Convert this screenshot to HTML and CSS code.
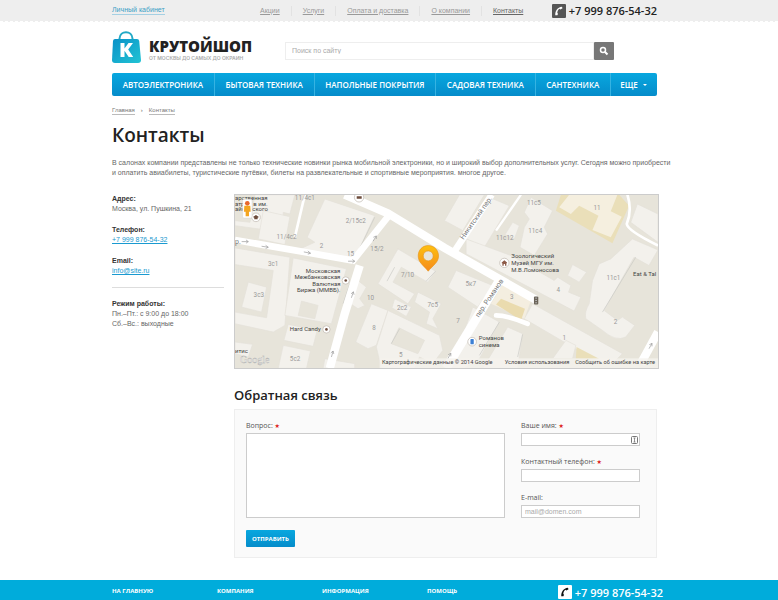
FILE: index.html
```html
<!DOCTYPE html>
<html lang="ru">
  <head>
    <meta charset="UTF-8" />
    <meta name="viewport" content="width=device-width, initial-scale=1.0" />
    <title>Контакты — Крутойшоп</title>
    <link rel="stylesheet" href="styles.css">
  </head>

  <body>
    <div class="topbar">
      <div class="container topbar-inner">
        <a href="#" class="cabinet">Личный кабинет</a>
        <nav class="top-menu">
          <a href="#">Акции</a>
          <a href="#">Услуги</a>
          <a href="#">Оплата и доставка</a>
          <a href="#">О компании</a>
          <a href="#" class="active">Контакты</a>
        </nav>
        <div class="phone">
          <svg class="phone-icon" viewBox="0 0 13 13">
            <rect width="13" height="13" rx="1" fill="#555" />
            <path d="M3 10.500 C3 6 5 3 9.200 2.500 L9.800 4 L7.800 5 L7 4.500 C5.600 5.500 5 6.800 4.900 8.400 L5.600 9 L5 10.500 Z" fill="#fff" />
          </svg>
          <span>+7 999 876-54-32</span>
        </div>
      </div>
    </div>

    <header class="container header">
      <a href="#" class="logo">
        <svg class="logo-icon" viewBox="0 0 29 32">
          <defs>
            <linearGradient id="bag" x1="0" y1="0" x2="1" y2="1">
              <stop offset="0" stop-color="#0991c8" />
              <stop offset="1" stop-color="#22c4d4" />
            </linearGradient>
          </defs>
          <path d="M7.5 9 V7.5 C8 -1 20 -1 20.5 7.5 V9" fill="none" stroke="#22a9c6" stroke-width="2" />
          <path d="M3 8 H25 Q27 8 27.2 10 L29 29 Q29 32 26 32 H3 Q0 32 0 29 L1 10 Q1.200 8 3 8 Z" fill="url(#bag)" />
          <path d="M8.500 12 H12.500 V17.500 L16.500 12 H21 L16.200 18.600 L21.200 26 H16.700 L12.500 19.800 V26 H8.500 Z" fill="#fff" />
        </svg>
        <span class="logo-text">
          <b>КРУТОЙШОП</b>
          <small>ОТ МОСКВЫ ДО САМЫХ ДО ОКРАИН</small>
        </span>
      </a>
      <form class="search">
        <input type="text" placeholder="Поиск по сайту" aria-label="Поиск по сайту" />
        <button type="button" aria-label="Найти">
          <svg viewBox="0 0 10 10">
            <circle cx="4" cy="4" r="2.500" fill="none" stroke="#fff" stroke-width="1.500" />
            <path d="M6 6 L8.500 8.500" stroke="#fff" stroke-width="2" />
          </svg>
        </button>
      </form>
    </header>

    <nav class="container main-menu">
      <a href="#">АВТОЭЛЕКТРОНИКА</a>
      <a href="#">БЫТОВАЯ ТЕХНИКА</a>
      <a href="#">НАПОЛЬНЫЕ ПОКРЫТИЯ</a>
      <a href="#">САДОВАЯ ТЕХНИКА</a>
      <a href="#">САНТЕХНИКА</a>
      <a href="#" class="more">ЕЩЕ
        <svg class="arrow" viewBox="0 0 6 4"><path d="M1 1 H5 L3 3 Z" fill="#fff" /></svg>
      </a>
    </nav>

    <main class="container">
      <div class="breadcrumbs">
        <a href="#">Главная</a>
        <span>›</span>
        <a href="#">Контакты</a>
      </div>
      <h1>Контакты</h1>
      <p class="intro">
        В салонах компании представлены не только технические новинки рынка мобильной электроники, но и широкий выбор дополнительных услуг. Сегодня можно приобрести<br />
        и оплатить авиабилеты, туристические путёвки, билеты на развлекательные и спортивные мероприятия. многое другое.
      </p>

      <div class="columns">
        <aside class="info">
          <p><b>Адрес:</b><br />Москва, ул. Пушкина, 21</p>
          <p><b>Телефон:</b><br /><a href="#">+7 999 876-54-32</a></p>
          <p><b>Email:</b><br /><a href="#">info@site.ru</a></p>
          <hr />
          <p><b>Режим работы:</b><br />Пн.–Пт.: с 9:00 до 18:00<br />Сб.–Вс.: выходные</p>
        </aside>

        <section class="content">
          <div class="map">
            <svg viewBox="15 12 1272 522" preserveAspectRatio="xMidYMid slice">
              <defs>
                <linearGradient id="pin" x1="0" y1="0" x2="0" y2="1">
                  <stop offset="0" stop-color="#fdc010" />
                  <stop offset="1" stop-color="#f58a1c" />
                </linearGradient>
              </defs>
              <rect x="15" y="12" width="1272" height="522" fill="#e7e4da" />

              <!-- buildings -->
              <g fill="#f3f1ec" stroke="#e4e1da" stroke-width="2">
                <path d="M75 12 H195 L180 70 L160 65 L160 125 L15 105 V90 L60 95 Z" />
                <path d="M100 60 L180 78 L165 162 L85 145 Z" />
                <path d="M285 25 L435 75 L375 205 L200 180 L255 155 L232 140 Z" />
                <path d="M15 172 L180 200 L165 405 L130 425 L15 400 V365 L110 382 L130 240 L15 222 Z" />
                <path d="M55 275 L110 290 L95 365 L35 350 Z" />
                <path d="M190 202 L350 235 L305 400 L165 375 Z" />
                <path d="M215 332 L265 345 L255 385 L205 375 Z" fill="#e7e4da" />
                <path d="M175 402 L262 420 L250 468 L162 450 Z" />
                <path d="M160 465 L242 482 L230 534 H145 Z" />
                <path d="M15 455 L68 462 L55 500 L15 490 Z" />
                <path d="M285 505 L375 520 V534 H280 Z" />
                <path d="M505 175 L618 242 L595 275 L515 230 L490 275 L555 310 L535 340 L445 280 Z" />
                <path d="M385 270 L410 290 L390 325 L405 345 L385 355 L355 335 Z" />
                <path d="M425 340 L475 360 L440 465 L415 475 L378 455 Z" />
                <path d="M475 360 L630 435 L640 480 L610 520 L570 500 L555 534 H455 L440 470 Z" />
                <path d="M508 412 L585 450 L565 490 L485 460 Z" fill="#e7e4da" />
                <path d="M495 325 L545 350 L530 378 L487 352 Z" />
                <path d="M565 305 L635 340 L610 385 L625 415 L590 400 L600 365 L555 335 Z" />
                <path d="M690 12 H765 L700 120 L645 90 Z" />
                <path d="M780 20 L840 45 L765 170 L710 145 Z" />
                <path d="M850 95 L870 105 L855 145 L827 132 Z" />
                <path d="M905 20 L970 60 L945 110 L955 130 L915 195 L872 170 L885 110 L900 85 L885 65 Z" />
                <path d="M710 145 L845 195 L975 270 L985 260 L1025 285 L1018 305 L1055 320 L1035 362 L710 190 Z" />
                <path d="M1030 222 L1072 245 L1050 275 L1015 255 Z" />
                <path d="M680 240 L790 285 L745 350 L655 290 Z" />
                <path d="M730 350 L810 395 L750 505 L705 534 H665 Z" />
                <path d="M835 410 L880 430 L865 534 H760 Z" />
                <path d="M910 340 L1180 490 L1150 520 L1090 505 L885 385 Z" />
                <path d="M1010 450 L1040 465 L1030 505 L970 505 Z" />
                <path d="M1210 145 L1287 178 L1260 225 L1215 200 L1125 360 L1165 390 L1180 380 L1217 405 L1190 440 Q1160 455 1120 420 L1070 385 Q1065 365 1080 340 L1090 270 L1110 220 L1145 205 Z" />
                <path d="M1225 40 L1287 70 V155 L1205 95 Z" />
              </g>
              <path d="M995 12 H1170 L1200 45 L1150 158 L980 60 Z" fill="#eadfb9" />
              <path d="M1020 12 H1165 L1145 62 L1178 78 L1145 140 L1090 118 L1108 75 L1050 45 L1025 70 L990 50 Z" fill="#f5efdf" />
              <path d="M820 280 L905 330 L885 385 L785 340 Z" fill="#f4eee0" />
              <path d="M815 325 L887 355 L875 390 L800 342 Z" fill="#eadbae" />
              <path d="M1042 470 L1110 505 H1040 Z" fill="#eadfb9" />
              <path d="M472 272 L495 230 M590 272 L618 242 M485 460 L510 415 M360 280 L340 340 M1120 365 L1220 200 M750 495 L810 395 M865 500 L880 432 M375 205 L435 80" fill="none" stroke="#c8c8c4" stroke-width="2" />

              <!-- streets -->
              <g fill="none" stroke="#fff">
                <path d="M345 12 L475 68 L645 172 L920 328" stroke-width="25" />
                <path d="M15 148 L370 210 L480 72" stroke-width="20" />
                <path d="M390 225 L345 370 L300 534" stroke-width="25" />
                <path d="M787 12 L670 190" stroke-width="20" />
                <path d="M810 270 L650 534" stroke-width="27" />
                <path d="M225 12 L195 140" stroke-width="8" />
                <path d="M875 12 L800 120" stroke-width="7" />
                <path d="M800 375 Q835 375 895 400" stroke-width="14" stroke-linecap="round" />
                <path d="M1195 12 Q1210 60 1193 100 Q1195 120 1287 165" stroke-width="8" />
                <path d="M1287 425 L1235 520" stroke-width="25" />
              </g>
              <g class="road-arrow">
                <path d="M35 153 h20 m-7 -5 l7 5 -7 5" />
                <path d="M95 167 l20 3 m-8 -6 l8 6 -8 4" />
                <path d="M222 184 l20 4 m-8 -7 l8 7 -8 3" />
                <path d="M355 212 h20 m-7 -5 l7 5 -7 5" />
                <path d="M430 152 l10 -16 m-9 4 l9 -4 0 9" />
                <path d="M365 322 l6 -18 m-7 6 l7 -6 2 9" />
                <path d="M305 500 l5 -18 m-7 6 l7 -6 2 9" />
                <path d="M655 505 l9 -16 m-8 4 l8 -4 0 9" />
                <path d="M1260 475 l9 -16 m-8 4 l8 -4 0 9" />
              </g>

              <g class="house">
                <text x="195" y="28">11/4с1</text>
                <text x="140" y="146">11/4с2</text>
                <text x="348" y="97">2/15с2</text>
                <text x="270" y="172">2</text>
                <text x="352" y="196">15</text>
                <text x="422" y="181">15/2</text>
                <text x="114" y="225">3с1</text>
                <text x="71" y="320">3с3</text>
                <text x="514" y="260">7/10</text>
                <text x="412" y="328">10</text>
                <text x="502" y="359">2с2</text>
                <text x="594" y="351">7с5</text>
                <text x="428" y="420">8</text>
                <text x="508" y="500">5</text>
                <text x="180" y="512">5с2</text>
                <text x="893" y="43">11с5</text>
                <text x="1093" y="59">11</text>
                <text x="897" y="126">11с4</text>
                <text x="800" y="148">11с12</text>
                <text x="1132" y="270">11с1</text>
                <text x="708" y="286">5к7</text>
                <text x="842" y="327">3</text>
                <text x="982" y="304">4</text>
                <text x="1154" y="400">2</text>
                <text x="680" y="398">7</text>
                <text x="1000" y="450">1</text>
              </g>

              <g class="street">
                <text transform="translate(702 148) rotate(-55)">Никитский пер.</text>
                <text transform="translate(748 382) rotate(-56)">пер. Романов</text>
                <text x="15" y="160">р.</text>
              </g>

              <g class="place">
                <text x="15" y="28">арственная</text>
                <text x="15" y="45">атр</text>
                <text x="70" y="45">в им.</text>
                <text x="15" y="62">айк</text>
                <text x="67" y="62">ского</text>
                <text x="15" y="487">итис</text>
                <g text-anchor="end">
                  <text x="332" y="246">Московская</text>
                  <text x="332" y="266">Межбанковская</text>
                  <text x="332" y="286">Валютная</text>
                  <text x="332" y="306">Биржа (ММВБ).</text>
                  <text x="273" y="423">Hard Candy</text>
                </g>
                <text x="846" y="203">Зоологический</text>
                <text x="846" y="223">Музей МГУ им.</text>
                <text x="846" y="243">М.В.Ломоносова</text>
                <text x="748" y="450">Романов</text>
                <text x="748" y="470">синема</text>
                <text x="1212" y="257">Eat &amp; Tal</text>
              </g>

              <g fill="#fff" stroke="#bdb5ac" stroke-width="2">
                <circle cx="348" cy="270" r="11" />
                <circle cx="290" cy="417" r="11" />
                <circle cx="825" cy="217" r="14" />
                <circle cx="728" cy="454" r="13" />
                <circle cx="388" cy="20" r="14" />
                <circle cx="78" cy="80" r="13" />
              </g>
              <circle cx="348" cy="270" r="4" fill="#6d4c3c" />
              <circle cx="290" cy="417" r="4" fill="#6d4c3c" />
              <path d="M381 17 h15 v7 h-15 Z M69 79 l9 -6 9 6 -4 2 v5 h-10 v-5 Z" fill="#6d4c3c" />
              <path d="M817 216 l8 -7 8 7 v2 h-2 v8 h-4 v-6 h-4 v6 h-4 v-8 h-2 Z" fill="#8d5a48" />
              <rect x="723" y="446" width="10" height="16" rx="2" fill="#3b7fd4" />
              <rect x="914" y="318" width="13" height="24" rx="3" fill="#6b6459" />
              <path d="M918 323 h5 M918 330 h5 M918 337 h5" stroke="#bbb" stroke-width="3" />

              <!-- street view man -->
              <rect x="38" y="26" width="28" height="56" rx="4" fill="#fff" stroke="#ccc" />
              <circle cx="52" cy="38" r="7" fill="#e8672b" />
              <path d="M43 45 H61 L62 63 H57 V77 H47 V63 H42 Z" fill="#f3a51f" />

              <path d="M596 165 C578 165 566 179 566 196 C566 216 581 223 596 242 C611 223 627 216 627 196 C627 179 614 165 596 165 Z M596 181 A15 15 0 1 1 596 211 A15 15 0 1 1 596 181 Z" fill="url(#pin)" fill-rule="evenodd" stroke="#e8951c" stroke-width="2" />

              <rect x="450" y="504" width="837" height="30" fill="#f5f3ee" fill-opacity="0.8" />
              <text x="30" y="518" class="google">Google</text>
              <g class="copyright">
                <text x="457" y="522">Картографические данные © 2014 Google</text>
                <text x="826" y="522">Условия использования</text>
                <text x="1038" y="522">Сообщить об ошибке на карте</text>
              </g>
            </svg>
          </div>

          <h2>Обратная связь</h2>
          <form class="feedback">
            <div class="question">
              <label for="question">Вопрос: <i>★</i></label>
              <textarea id="question"></textarea>
              <button type="button">ОТПРАВИТЬ</button>
            </div>
            <div class="fields">
              <label for="name">Ваше имя: <i>★</i></label>
              <div class="name-field">
                <input type="text" id="name" />
                <svg viewBox="0 0 7 8">
                  <rect x="0.500" y="0.500" width="6" height="7" rx="1" fill="#fff" stroke="#777" />
                  <path d="M3.500 2 V6 M2.500 2 H4.500 M2.500 6 H4.500" stroke="#777" stroke-width="0.800" />
                </svg>
              </div>
              <label for="tel">Контактный телефон: <i>★</i></label>
              <input type="tel" id="tel" />
              <label for="email">E-mail:</label>
              <input type="email" id="email" placeholder="mail@domen.com" />
            </div>
          </form>
        </section>
      </div>
    </main>

    <footer class="footer">
      <div class="container footer-inner">
        <nav class="footer-menu">
          <a href="#">НА ГЛАВНУЮ</a>
          <a href="#">КОМПАНИЯ</a>
          <a href="#">ИНФОРМАЦИЯ</a>
          <a href="#">ПОМОЩЬ</a>
        </nav>
        <div class="phone">
          <svg class="phone-icon" viewBox="0 0 13 13">
            <rect width="13" height="13" rx="1" fill="#fff" />
            <path d="M3 10.500 C3 6 5 3 9.200 2.500 L9.800 4 L7.800 5 L7 4.500 C5.600 5.500 5 6.800 4.900 8.400 L5.600 9 L5 10.500 Z" fill="#111" />
          </svg>
          <span>+7 999 876-54-32</span>
        </div>
      </div>
    </footer>
  </body>
</html>
```
FILE: styles.css
```css
* {
  box-sizing: border-box;
}

body {
  display: flex;
  flex-direction: column;
  min-height: 100vh;
  margin: 0;
  background: #fff;
  color: #666;
  font: 7px/10px "Liberation Sans", Arial, sans-serif;
}

h1,
h2,
p {
  margin: 0;
}

input,
textarea,
button {
  margin: 0;
  font-family: inherit;
}

.container {
  margin: 0 121px 0 112px;
}

/* top bar */
.topbar {
  background: #eee;
  border-bottom: 1px dashed #fff;
}

.topbar-inner {
  display: flex;
  align-items: center;
  justify-content: space-between;
  height: 21px;
}

.cabinet {
  color: #3d9fc6;
  line-height: 8px;
  text-decoration: none;
  border-bottom: 1px solid #a5d0e3;
}

.top-menu {
  display: flex;
  margin-left: 62px;
}

.top-menu a {
  padding: 0 11px;
  color: #999;
  border-left: 1px solid #e2e2e2;
}

.top-menu a:first-child {
  border-left: none;
}

.top-menu .active {
  padding-right: 6px;
  color: #666;
}

.phone {
  display: flex;
  align-items: center;
  gap: 3px;
  color: #222;
  font: 600 11px/13px "Open Sans", sans-serif;
}

.phone-icon {
  width: 14px;
  height: 14px;
}

/* header */
.header {
  display: flex;
  align-items: center;
  height: 51px;
  padding-right: 43px;
}

.logo {
  display: flex;
  gap: 8px;
  width: 173px;
  margin-top: -2px;
  color: #222;
  text-decoration: none;
}

.logo-icon {
  width: 29px;
  height: 32px;
}

.logo-text {
  display: flex;
  flex-direction: column;
  padding-top: 6px;
}

.logo-text b {
  font: 800 15px/18px "Open Sans", sans-serif;
}

.logo-text small {
  color: #aaa;
  font: 600 5px/6px Inter, sans-serif;
}

.search {
  display: flex;
  flex: 1;
  height: 18px;
  margin-top: 6px;
}

.search input {
  flex: 1;
  min-width: 0;
  padding: 0 6px;
  border: 1px solid #eee;
  font-size: 7px;
}

::placeholder {
  color: #aaa;
}

.search button {
  width: 20px;
  padding: 0;
  border: none;
  border-radius: 1px;
  background: #777;
}

.search svg {
  display: block;
  width: 10px;
  height: 10px;
  margin: 0 auto;
}

/* main menu */
.main-menu {
  display: flex;
  height: 23px;
  border-radius: 2px;
  background: linear-gradient(#08a7df, #058cca);
  overflow: hidden;
}

.main-menu a {
  flex: 1 1 auto;
  color: #fff;
  font: 600 8px/23px "Open Sans", sans-serif;
  text-align: center;
  text-decoration: none;
  white-space: nowrap;
  border-left: 1px solid #36b3e2;
}

.main-menu a:first-child {
  border-left: none;
}

.main-menu .more {
  flex: 0 0 47px;
}

.arrow {
  width: 6px;
  height: 4px;
  margin: 0 0 1px 2px;
}

/* page */
.breadcrumbs {
  display: flex;
  gap: 6px;
  padding-top: 10px;
  font-size: 6px;
  line-height: 8px;
}

.breadcrumbs a {
  color: #777;
  text-decoration: none;
  border-bottom: 1px solid #bbb;
}

h1 {
  padding: 8px 0 11px;
  color: #222;
  font: 600 19px/24px "Open Sans", sans-serif;
}

.intro {
  margin-right: -20px;
}

.columns {
  display: grid;
  grid-template-columns: 112px 1fr;
  gap: 10px;
  padding-top: 16px;
}

.info p {
  margin-bottom: 11px;
}

.info b {
  color: #333;
}

.info a {
  color: #1a9ad0;
}

.info hr {
  margin: 0 0 11px;
  border: none;
  border-top: 1px solid #ddd;
}

.map {
  height: 175px;
  margin-right: -2px;
  border: 1px solid #ccc;
}

.map > svg {
  display: block;
  width: 100%;
  height: 100%;
  font-family: Roboto, sans-serif;
}

.road-arrow {
  fill: none;
  stroke: #999;
  stroke-width: 2;
}

.house {
  fill: #999;
  font-size: 19px;
}

.street {
  fill: #777;
  font-size: 21px;
}

.place {
  fill: #444;
  font-size: 18px;
}

.google {
  fill: #fff;
  stroke: #aaa;
  font: 30px "Liberation Serif", serif;
}

.copyright {
  fill: #444;
  font-size: 17px;
}

h2 {
  padding: 17px 0 5px;
  color: #222;
  font: 600 13px/18px "Open Sans", sans-serif;
}

/* feedback form */
.feedback {
  display: grid;
  grid-template-columns: 1fr 119px;
  gap: 16px;
  height: 149px;
  padding: 11px 16px 11px 11px;
  border: 1px solid #eee;
  background: #fafafa;
  font-family: "Open Sans", sans-serif;
}

.feedback label {
  display: block;
  margin-bottom: 2px;
  color: #555;
  line-height: 10px;
}

.feedback i {
  color: #d22;
  font: 6px/6px "DejaVu Sans", sans-serif;
}

.feedback textarea,
.feedback input {
  display: block;
  width: 100%;
  border: 1px solid #ccc;
  background: #fff;
}

.feedback textarea {
  height: 85px;
  resize: none;
}

.feedback input {
  height: 13px;
  margin-bottom: 11px;
  padding: 0 3px;
  font: 7px "Liberation Sans", sans-serif;
}

.name-field {
  position: relative;
}

.name-field svg {
  position: absolute;
  top: 3px;
  right: 2px;
  width: 7px;
  height: 8px;
}

.feedback button {
  height: 17px;
  margin-top: 12px;
  padding: 0 6px;
  border: none;
  border-radius: 1px;
  background: linear-gradient(#08a7df, #058cca);
  color: #fff;
  font-size: 6px;
  font-weight: 700;
}

/* footer */
.footer {
  flex: 1;
  margin-top: 22px;
  background: #00acdb;
}

.footer-inner {
  display: flex;
  justify-content: space-between;
  margin-right: 115px;
  padding-top: 5px;
}

.footer-menu {
  display: grid;
  grid-template-columns: repeat(4, 105px);
}

.footer-menu a {
  color: #fff;
  font: 700 6px/13px "Open Sans", sans-serif;
  text-decoration: none;
}

.footer .phone {
  color: #fff;
}
```
